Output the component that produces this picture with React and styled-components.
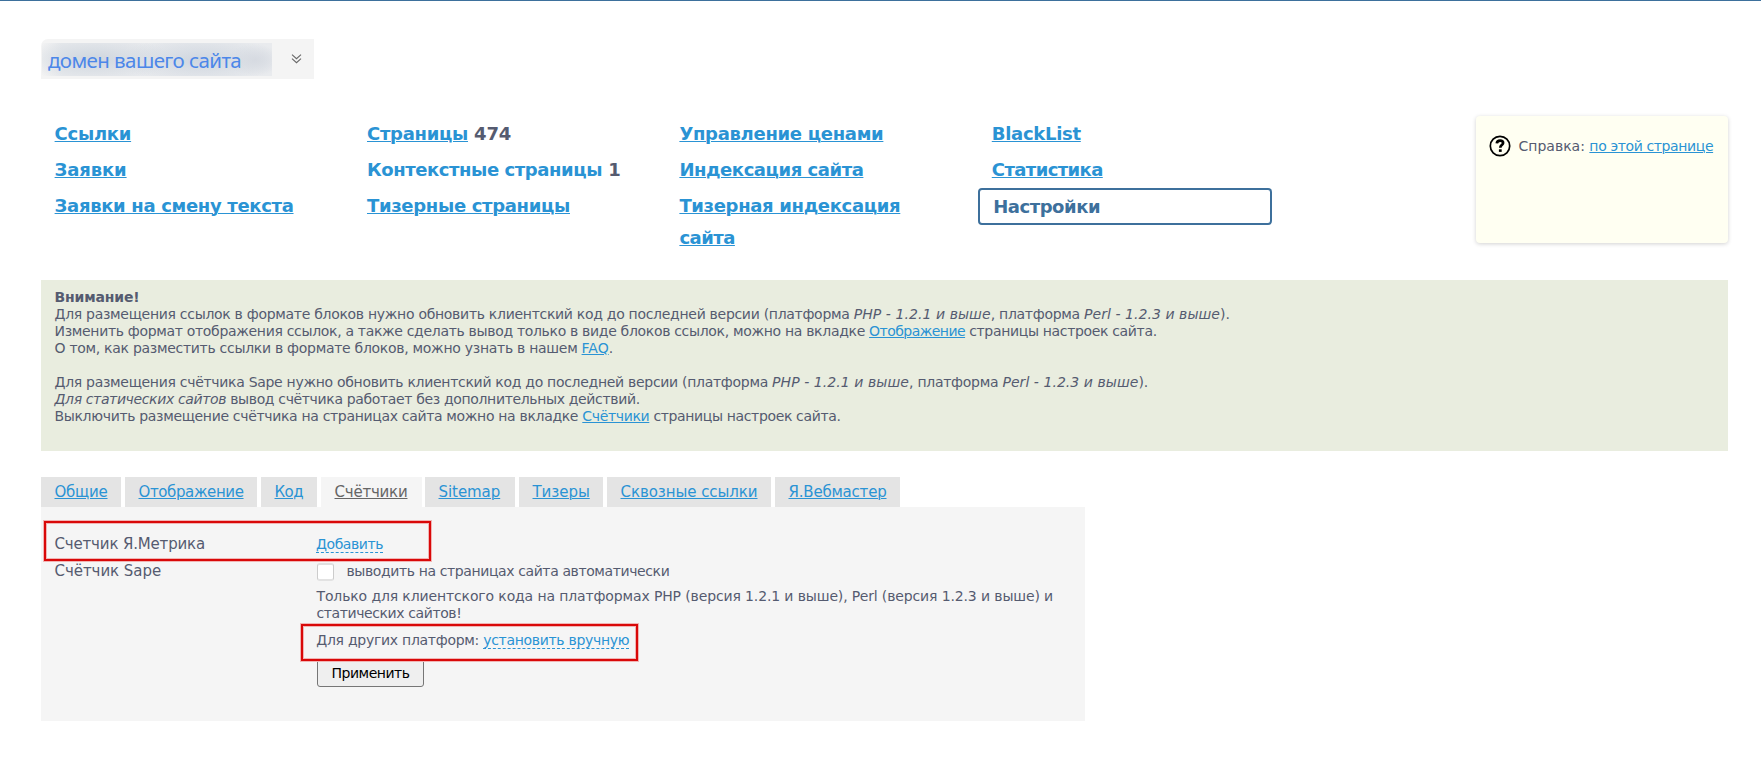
import React from 'react';
import styled, { createGlobalStyle, css } from 'styled-components';

const GlobalStyle = createGlobalStyle`
  * { box-sizing: border-box; }
  body {
    margin: 0;
    background: #fff;
    color: #555b70;
    font: 14px/17px Verdana, "DejaVu Sans", sans-serif;
  }
`;

const linkLook = css`
  color: #2a93d4;
  text-decoration: underline;
  text-decoration-thickness: 1px;
  text-underline-offset: 1px;
`;

const Page = styled.div`
  min-height: 760px;
  padding: 38px 33px 0 41px;
  border-top: 1px solid #3d709c;
`;

const Text = styled.span`
  letter-spacing: ${(p) => p.$track ?? 0}px;
  white-space: pre;
`;

const Em = styled(Text)`
  font-style: italic;
`;

const Link = styled(Text).attrs({ as: 'a' })`
  ${linkLook}
  cursor: pointer;
`;

const DashedLink = styled(Text).attrs({ as: 'a' })`
  display: inline-block;
  height: 17px;
  color: #2a93d4;
  border-bottom: 1px dashed #2a93d4;
  cursor: pointer;
`;

const DomainPicker = styled.div`
  display: flex;
  align-items: center;
  width: 273px;
  height: 40px;
  padding-left: 1px;
  background: #f4f4f4;
  border-top-left-radius: 7px;
`;

const DomainName = styled.div`
  width: 230px;
  height: 33px;
  padding-left: 6px;
  margin-top: 1px;
  background:
    radial-gradient(ellipse 28px 16px at 213px 17px, #d6dae1, transparent),
    radial-gradient(ellipse 80px 22px at 52px 16px, #cfd6de, transparent),
    radial-gradient(ellipse 80px 24px at 158px 17px, #cfd6df, transparent),
    linear-gradient(90deg, #f4f4f4, #e8eaed 20px, #e9ebee);
  color: #4c87e9;
  font: 20.5px/34px "Noto Sans", sans-serif;
`;

const ExpandIcon = styled.svg`
  display: block;
  margin: 0 0 1px 19px;
`;

const TopRow = styled.div`
  display: flex;
  justify-content: space-between;
  height: 164px;
  margin-top: 37px;
`;

const Nav = styled.nav`
  display: grid;
  grid-template-columns: repeat(4, 294px);
  column-gap: 18.4px;
`;

const NavColumn = styled.div`
  display: flex;
  flex-direction: column;
`;

const NavItem = styled.div`
  padding: 2px 12px 2px 13.6px;
  font: bold 18px/32px Verdana, "DejaVu Sans", sans-serif;
`;

const ActiveNavItem = styled(NavItem)`
  padding: 0 13px;
  border: 2px solid #3d709c;
  border-radius: 4px;
  color: #3d709c;
  line-height: 33px;
`;

const PlainNavLabel = styled(Text)`
  color: #2a93d4;
`;

const Help = styled.aside`
  display: flex;
  align-items: flex-start;
  width: 252px;
  height: 127px;
  padding: 19px 0 0 13px;
  background: #fffff2;
  border-radius: 4px;
  box-shadow: 0 1px 4px rgba(0, 0, 0, 0.18);
`;

const HelpText = styled.div`
  padding: 3px 0 0 7.5px;
  white-space: nowrap;
`;

const Notice = styled.section`
  height: 171px;
  padding: 9px 13.5px;
  background: #e9eddf;
`;

const NoticeLine = styled.div`
  height: 17px;
  white-space: nowrap;
`;

const Strong = styled(Text)`
  font-weight: bold;
`;

const Tabs = styled.div`
  display: flex;
  margin-top: 26px;
`;

const Tab = styled.a`
  ${linkLook}
  width: ${(p) => p.$width}px;
  height: 30px;
  margin-right: ${(p) => p.$gap ?? 4}px;
  padding-left: 13.5px;
  background: ${(p) => (p.$active ? '#f5f5f5' : '#e4e4e4')};
  color: ${(p) => (p.$active ? '#666' : '#2a93d4')};
  font-size: 15px;
  line-height: 31px;
  letter-spacing: ${(p) => p.$track}px;
  white-space: nowrap;
  cursor: pointer;
`;

const Panel = styled.section`
  width: 1044px;
  height: 214px;
  padding: 28px 13px 0;
  background: #f5f5f5;
`;

const Row = styled.div`
  position: relative;
  display: grid;
  grid-template-columns: 262px 1fr;
  height: ${(p) => p.$height}px;
`;

const Label = styled.div`
  padding: 1px 0 0 0.5px;
  font-size: 15px;
`;

const Value = styled.div`
  position: relative;
  padding-top: 1px;
`;

const Option = styled.div`
  display: flex;
  height: 25px;
`;

const Checkbox = styled.span`
  width: 17px;
  height: 18px;
  margin: 0 12.4px 0 1px;
  background: #fff;
  border: 1px solid #ccc;
  border-bottom: 2px solid #e2e2e2;
  border-top: 2px solid #e0e0e0;
  border-radius: 3px;
`;

const Hint = styled.div`
  height: 44px;
  padding-left: 0.5px;
`;

const Manual = styled.div`
  height: 26px;
  padding-left: 0.3px;
`;

const Button = styled.button`
  display: block;
  width: 107px;
  height: 29px;
  margin-left: 1px;
  padding: 1px 0 0;
  border: 1px solid #767676;
  border-radius: 3px;
  background: #efefef;
  color: #000;
  font: 14px/25px Verdana, "DejaVu Sans", sans-serif;
  letter-spacing: -0.48px;
`;

const Highlight = styled.div`
  position: absolute;
  left: ${(p) => p.$x}px;
  top: ${(p) => p.$y}px;
  width: ${(p) => p.$w}px;
  height: ${(p) => p.$h}px;
  border: 2px solid #d90808;
  box-shadow: 0 0 0 1px #f1b4b4, inset 0 0 0 1px #f1b4b4;
  pointer-events: none;
`;

const NAV = [
  [
    [['Ссылки', -0.28]],
    [['Заявки', -0.12]],
    [['Заявки на смену текста', -0.32]],
  ],
  [
    [['Страницы', -0.29], ' 474'],
    [['Контекстные страницы', -0.42, true], ' 1'],
    [['Тизерные страницы', -0.32]],
  ],
  [
    [['Управление ценами', -0.3]],
    [['Индексация сайта', -0.44]],
    [['Тизерная индексация', -0.33], null, ['сайта', -0.5]],
  ],
  [[['BlackList', -0.29]], [['Статистика', -0.59]]],
];

const TABS = [
  { label: 'Общие', width: 80, track: -0.23 },
  { label: 'Отображение', width: 132, track: -0.38 },
  { label: 'Код', width: 56, track: -0.57 },
  { label: 'Счётчики', width: 101, track: -0.22, gap: 3, active: true },
  { label: 'Sitemap', width: 90, track: -0.06 },
  { label: 'Тизеры', width: 84, track: -0.04 },
  { label: 'Сквозные ссылки', width: 164, track: -0.06 },
  { label: 'Я.Вебмастер', width: 125, track: -0.2 },
];

function Versions() {
  return (
    <>
      <Em $track={0.07}>PHP - 1.2.1 и выше</Em>
      <Text $track={-0.28}>, платформа </Text>
      <Em $track={0.05}>Perl - 1.2.3 и выше</Em>).
    </>
  );
}

export default function App() {
  return (
    <Page>
      <GlobalStyle />
      <DomainPicker>
        <DomainName>
          <Text $track={-0.58}>домен вашего сайта</Text>
        </DomainName>
        <ExpandIcon width="11" height="10" viewBox="0 0 11 10" fill="none" stroke="#666" strokeWidth="1.1">
          <path d="M1 .7 5.5 4.7 10 .7M1 4.7 5.5 8.7 10 4.7" />
        </ExpandIcon>
      </DomainPicker>

      <TopRow>
        <Nav>
          {NAV.map((column, c) => (
            <NavColumn key={c}>
              {column.map(([main, count, rest]) => (
                <NavItem key={main[0]}>
                  {main[2] ? (
                    <PlainNavLabel $track={main[1]}>{main[0]}</PlainNavLabel>
                  ) : (
                    <Link $track={main[1]}>{main[0]}</Link>
                  )}
                  {count && <Text $track={-0.19}>{count}</Text>}
                  {rest && (
                    <>
                      <br />
                      <Link $track={rest[1]}>{rest[0]}</Link>
                    </>
                  )}
                </NavItem>
              ))}
              {c === 3 && (
                <ActiveNavItem>
                  <Text $track={-0.45}>Настройки</Text>
                </ActiveNavItem>
              )}
            </NavColumn>
          ))}
        </Nav>
        <Help>
          <svg width="22" height="22" viewBox="0 0 22 22" fill="none" stroke="#000">
            <circle cx="11" cy="11" r="9.7" strokeWidth="1.7" />
            <path d="M7.8 8.4C8 6.4 9.3 5.6 11.1 5.6c1.9 0 3 .9 3 2.3 0 2.1-2.8 2.4-2.8 4.8" strokeWidth="2.7" />
            <path d="M9.9 14.3h2.8v2.6H9.9z" fill="#000" stroke="none" />
          </svg>
          <HelpText>
            Справка: <Link $track={-0.38}>по этой странице</Link>
          </HelpText>
        </Help>
      </TopRow>

      <Notice>
        <NoticeLine>
          <Strong $track={-0.16}>Внимание!</Strong>
        </NoticeLine>
        <NoticeLine>
          <Text $track={-0.296}>
            Для размещения ссылок в формате блоков нужно обновить клиентский код до последней версии (платформа{' '}
          </Text>
          <Versions />
        </NoticeLine>
        <NoticeLine>
          <Text $track={-0.32}>
            Изменить формат отображения ссылок, а также сделать вывод только в виде блоков ссылок, можно на вкладке{' '}
          </Text>
          <Link $track={-0.54}>Отображение</Link>
          <Text $track={-0.34}> страницы настроек сайта.</Text>
        </NoticeLine>
        <NoticeLine>
          <Text $track={-0.29}>О том, как разместить ссылки в формате блоков, можно узнать в нашем </Text>
          <Link>FAQ</Link>.
        </NoticeLine>
        <NoticeLine />
        <NoticeLine>
          <Text $track={-0.3}>
            Для размещения счётчика Sape нужно обновить клиентский код до последней версии (платформа{' '}
          </Text>
          <Versions />
        </NoticeLine>
        <NoticeLine>
          <Em $track={-0.37}>Для статических сайтов</Em>
          <Text $track={-0.35}> вывод счётчика работает без дополнительных действий.</Text>
        </NoticeLine>
        <NoticeLine>
          <Text $track={-0.33}>Выключить размещение счётчика на страницах сайта можно на вкладке </Text>
          <Link $track={-0.34}>Счётчики</Link>
          <Text $track={-0.36}> страницы настроек сайта.</Text>
        </NoticeLine>
      </Notice>

      <Tabs>
        {TABS.map((t) => (
          <Tab key={t.label} $width={t.width} $gap={t.gap} $track={t.track} $active={t.active}>
            {t.label}
          </Tab>
        ))}
      </Tabs>

      <Panel>
        <Row $height={27}>
          <Label>
            <Text $track={-0.17}>Счетчик Я.Метрика</Text>
          </Label>
          <Value>
            <DashedLink $track={-0.43}>Добавить</DashedLink>
          </Value>
          <Highlight $x={-10} $y={-14} $w={387} $h={40} />
        </Row>
        <Row $height={159}>
          <Label>
            <Text $track={-0.05}>Счётчик Sape</Text>
          </Label>
          <Value>
            <Option>
              <Checkbox />
              <Text $track={-0.39}>выводить на страницах сайта автоматически</Text>
            </Option>
            <Hint>
              <Text $track={-0.13}>
                Только для клиентского кода на платформах PHP (версия 1.2.1 и выше), Perl (версия 1.2.3 и выше) и
              </Text>
              <br />
              <Text $track={-0.4}>статических сайтов!</Text>
            </Hint>
            <Manual>
              <Text $track={-0.28}>Для других платформ: </Text>
              <DashedLink $track={-0.31}>установить вручную</DashedLink>
            </Manual>
            <Button>Применить</Button>
            <Highlight $x={-15} $y={62} $w={337} $h={37} />
          </Value>
        </Row>
      </Panel>
    </Page>
  );
}
